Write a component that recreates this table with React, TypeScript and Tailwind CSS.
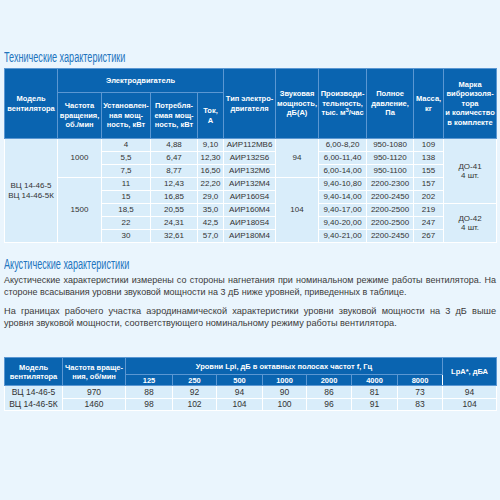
const mainRows = [
  { kw: "4", use: "4,88", amp: "9,10", motor: "АИР112МВ6", flow: "6,00-8,20", press: "950-1080", mass: "109" },
  { kw: "5,5", use: "6,47", amp: "12,30", motor: "АИР132S6", flow: "6,00-11,40", press: "950-1120", mass: "138" },
  { kw: "7,5", use: "8,77", amp: "16,50", motor: "АИР132М6", flow: "6,00-14,00", press: "950-1100", mass: "155" },
  { kw: "11", use: "12,43", amp: "22,20", motor: "АИР132М4", flow: "9,40-10,80", press: "2200-2300", mass: "157" },
  { kw: "15", use: "16,85", amp: "29,0", motor: "АИР160S4", flow: "9,40-14,00", press: "2200-2450", mass: "202" },
  { kw: "18,5", use: "20,55", amp: "35,0", motor: "АИР160М4", flow: "9,40-17,00", press: "2200-2500", mass: "219" },
  { kw: "22", use: "24,31", amp: "42,5", motor: "АИР180S4", flow: "9,40-20,00", press: "2200-2500", mass: "247" },
  { kw: "30", use: "32,61", amp: "57,0", motor: "АИР180М4", flow: "9,40-21,00", press: "2200-2450", mass: "267" },
];

const bands = ["125", "250", "500", "1000", "2000", "4000", "8000"];
const acoustic = [
  { rpm: "970", levels: ["88", "92", "94", "90", "86", "81", "73"], total: "94" },
  { rpm: "1460", levels: ["98", "102", "104", "100", "96", "91", "83"], total: "104" },
];

const th = "border border-[#5b97d2] bg-[#0a64b0] px-[1px] text-center align-middle font-bold text-white";
const td = "border border-white bg-[#d9edfa] px-[1px] text-center align-middle";

// condensed heading: no narrow face is installed, so squeeze a regular one
function SectionTitle({ children }: { children: React.ReactNode }) {
  return (
    <h2 className="h-[17px] whitespace-nowrap text-[14px] leading-[17px] text-[#2274bd]">
      <span className="inline-block origin-left scale-x-[0.65]">{children}</span>
    </h2>
  );
}

function SpecTable() {
  return (
    <table className="w-[492px] table-fixed border-collapse text-[8px] leading-[9.5px]">
      <colgroup>
        <col className="w-[53px]" />
        <col className="w-[44px]" />
        <col className="w-[49px]" />
        <col className="w-[47px]" />
        <col className="w-[26px]" />
        <col className="w-[52px]" />
        <col className="w-[43px]" />
        <col className="w-[48px]" />
        <col className="w-[47px]" />
        <col className="w-[30px]" />
        <col className="w-[53px]" />
      </colgroup>
      <thead className="text-[7.5px] leading-[9.5px]">
        <tr className="h-[24px]">
          <th rowSpan={2} className={th}>
            Модель
            <br />
            вентилятора
          </th>
          <th colSpan={4} className={th}>
            Электродвигатель
          </th>
          <th rowSpan={2} className={th}>
            Тип электро-
            <br />
            двигателя
          </th>
          <th rowSpan={2} className={th}>
            Звуковая
            <br />
            мощность,
            <br />
            дБ(А)
          </th>
          <th rowSpan={2} className={th}>
            Производи-
            <br />
            тельность,
            <br />
            тыс. м<sup className="text-[6px]">3</sup>/час
          </th>
          <th rowSpan={2} className={th}>
            Полное
            <br />
            давление,
            <br />
            Па
          </th>
          <th rowSpan={2} className={th}>
            Масса,
            <br />
            кг
          </th>
          <th rowSpan={2} className={th}>
            Марка
            <br />
            виброизоля-
            <br />
            тора
            <br />и количество
            <br />в комплекте
          </th>
        </tr>
        <tr className="h-[46px]">
          <th className={th}>
            Частота
            <br />
            вращения,
            <br />
            об./мин
          </th>
          <th className={th}>
            Установлен-
            <br />
            ная мощ-
            <br />
            ность, кВт
          </th>
          <th className={th}>
            Потребля-
            <br />
            емая мощ-
            <br />
            ность, кВт
          </th>
          <th className={th}>
            Ток,
            <br />А
          </th>
        </tr>
      </thead>
      <tbody className="text-[#333]">
        {mainRows.map((r, i) => (
          <tr key={r.kw} className="h-[13px]">
            {i === 0 && (
              <td rowSpan={8} className={td}>
                ВЦ 14-46-5
                <br />
                ВЦ 14-46-5К
              </td>
            )}
            {i === 0 && (
              <td rowSpan={3} className={td}>
                1000
              </td>
            )}
            {i === 3 && (
              <td rowSpan={5} className={td}>
                1500
              </td>
            )}
            <td className={td}>{r.kw}</td>
            <td className={td}>{r.use}</td>
            <td className={td}>{r.amp}</td>
            <td className={td}>{r.motor}</td>
            {i === 0 && (
              <td rowSpan={3} className={td}>
                94
              </td>
            )}
            {i === 3 && (
              <td rowSpan={5} className={td}>
                104
              </td>
            )}
            <td className={td}>{r.flow}</td>
            <td className={td}>{r.press}</td>
            <td className={td}>{r.mass}</td>
            {i === 0 && (
              <td rowSpan={5} className={td}>
                ДО-41
                <br />4 шт.
              </td>
            )}
            {i === 5 && (
              <td rowSpan={3} className={td}>
                ДО-42
                <br />4 шт.
              </td>
            )}
          </tr>
        ))}
      </tbody>
    </table>
  );
}

function AcousticTable() {
  return (
    <table className="w-[492px] table-fixed border-collapse text-[8.5px] leading-[10px]">
      <colgroup>
        <col className="w-[58px]" />
        <col className="w-[63px]" />
        <col className="w-[47px]" />
        <col className="w-[44px]" />
        <col className="w-[46px]" />
        <col className="w-[44px]" />
        <col className="w-[45px]" />
        <col className="w-[46px]" />
        <col className="w-[45px]" />
        <col className="w-[54px]" />
      </colgroup>
      <thead className="text-[7.5px] leading-[9px]">
        <tr className="h-[17px]">
          <th rowSpan={2} className={th}>
            Модель
            <br />
            вентилятора
          </th>
          <th rowSpan={2} className={th}>
            Частота враще-
            <br />
            ния, об/мин
          </th>
          <th colSpan={7} className={th}>
            Уровни Lpi, дБ в октавных полосах частот f, Гц
          </th>
          <th rowSpan={2} className={`${th} border-l-white`}>
            LpA*, дБА
          </th>
        </tr>
        <tr className="h-[11px]">
          {bands.map((b) => (
            <th key={b} className={th}>
              {b}
            </th>
          ))}
        </tr>
      </thead>
      <tbody className="text-[#333]">
        {acoustic.map((r, i) => (
          <tr key={r.rpm} className="h-[12px]">
            {i === 0 && (
              <td rowSpan={2} className={`${td} leading-[12px]`}>
                ВЦ 14-46-5
                <br />
                ВЦ 14-46-5К
              </td>
            )}
            <td className={td}>{r.rpm}</td>
            {r.levels.map((l, j) => (
              <td key={j} className={td}>
                {l}
              </td>
            ))}
            <td className={td}>{r.total}</td>
          </tr>
        ))}
      </tbody>
    </table>
  );
}

export default function App() {
  return (
    <div className="h-[500px] w-[500px] overflow-hidden bg-[#eaf5fd] px-[4px] pt-[49px] [font-family:'Liberation_Sans',Arial,sans-serif]">
      <SectionTitle>Технические характеристики</SectionTitle>
      <div className="mt-[2px]">
        <SpecTable />
      </div>
      <div className="mt-[13px]">
        <SectionTitle>Акустические характеристики</SectionTitle>
      </div>
      <div className="mt-[2px] text-justify leading-[11.5px] text-[#3a3a3a]">
        <p className="text-[9px]">
          Акустические характеристики измерены со стороны нагнетания при номинальном режиме работы вентилятора. На
          стороне всасывания уровни звуковой мощности на 3 дБ ниже уровней, приведенных в таблице.
        </p>
        <p className="mt-[8px] text-[9.2px]">
          На границах рабочего участка аэродинамической характеристики уровни звуковой мощности на 3 дБ выше
          уровня звуковой мощности, соответствующего номинальному режиму работы вентилятора.
        </p>
      </div>
      <div className="mt-[28px]">
        <AcousticTable />
      </div>
    </div>
  );
}
